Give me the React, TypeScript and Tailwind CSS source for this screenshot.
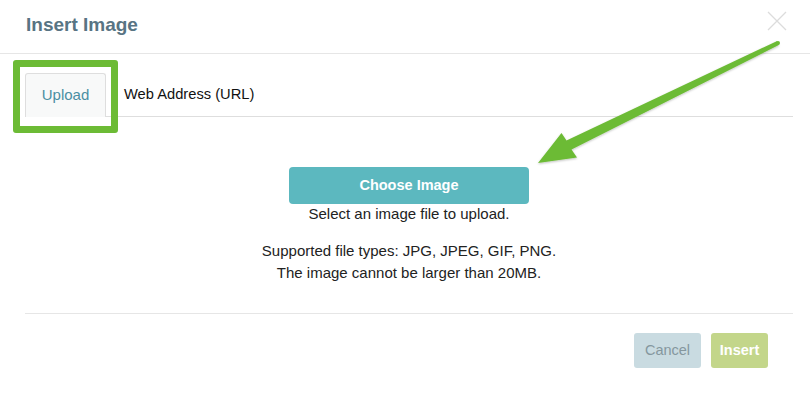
import React from "react";

function CloseIcon() {
  return (
    <svg width="20" height="20" viewBox="0 0 20 20" className="block">
      <path d="M1 1 L19 19 M19 1 L1 19" stroke="#dcdcdc" strokeWidth="1.3" fill="none" />
    </svg>
  );
}

function Arrow() {
  return (
    <svg
      className="absolute left-0 top-0 pointer-events-none"
      width="810"
      height="405"
      viewBox="0 0 810 405"
    >
      <defs>
        <filter id="sh" x="-10%" y="-10%" width="120%" height="120%">
          <feDropShadow dx="0" dy="1" stdDeviation="1.2" floodColor="#000" floodOpacity="0.25" />
        </filter>
      </defs>
      <polygon
        filter="url(#sh)"
        fill="#6cbb35"
        points="777.2,41 566.5,140.5 561.5,133 538,163 577,157.5 571.5,149.5 778.8,45"
      />
      <circle cx="778" cy="43" r="2" fill="#6cbb35" />
    </svg>
  );
}

export default function App() {
  return (
    <div
      className="relative w-[810px] h-[405px] bg-white overflow-hidden text-[#222]"
      style={{ fontFamily: '"Liberation Sans", Arial, sans-serif' }}
    >
      {/* header */}
      <div className="flex items-center justify-between h-[54px] border-b border-[#e6e6e6] pl-[25px] pr-[23px]">
        <h1 className="text-[19px] font-bold text-[#587483] -mt-[3px] ml-px">Insert Image</h1>
        <div className="-mt-[12px]">
          <CloseIcon />
        </div>
      </div>

      {/* body */}
      <div className="pl-[25px] pr-[17px]">
        <div className="flex items-end border-b border-[#dedede] mt-[20px] h-[43px]">
          <div className="flex items-center justify-center w-[81px] h-[44px] -mb-px bg-[#f8f9f9] border border-b-0 border-[#dedede] rounded-t-[3px] text-[15px] text-[#4b8fa3]">
            Upload
          </div>
          <div className="flex items-center h-[43px] pl-[18px] text-[14.7px] text-[#111]">
            Web Address (URL)
          </div>
        </div>

        <div className="flex flex-col items-center">
          <button className="mt-[50px] w-[240px] h-[37px] rounded-[4px] bg-[#5cb8bf] text-white font-bold text-[14.5px]">
            Choose Image
          </button>
          <p className="text-[15px] leading-[19px]">Select an image file to upload.</p>
          <p className="text-[15px] leading-[22px] mt-[17px] text-center">
            Supported file types: JPG, JPEG, GIF, PNG.
            <br />
            The image cannot be larger than 20MB.
          </p>
        </div>

        <div className="border-t border-[#e6e6e6] mt-[29px] flex justify-end gap-[10px] pt-[19px] pr-[25px]">
          <button className="w-[67px] h-[35px] rounded-[3px] bg-[#c9dbe1] text-[#85979e] text-[14.5px]">
            Cancel
          </button>
          <button className="w-[57px] h-[35px] rounded-[3px] bg-[#c3d68a] text-white font-bold text-[14.5px]">
            Insert
          </button>
        </div>
      </div>

      {/* annotations */}
      <div className="absolute left-[13px] top-[60px] w-[105px] h-[73px] border-[7px] border-[#6cbb35] rounded-[3px]" />
      <Arrow />
    </div>
  );
}
